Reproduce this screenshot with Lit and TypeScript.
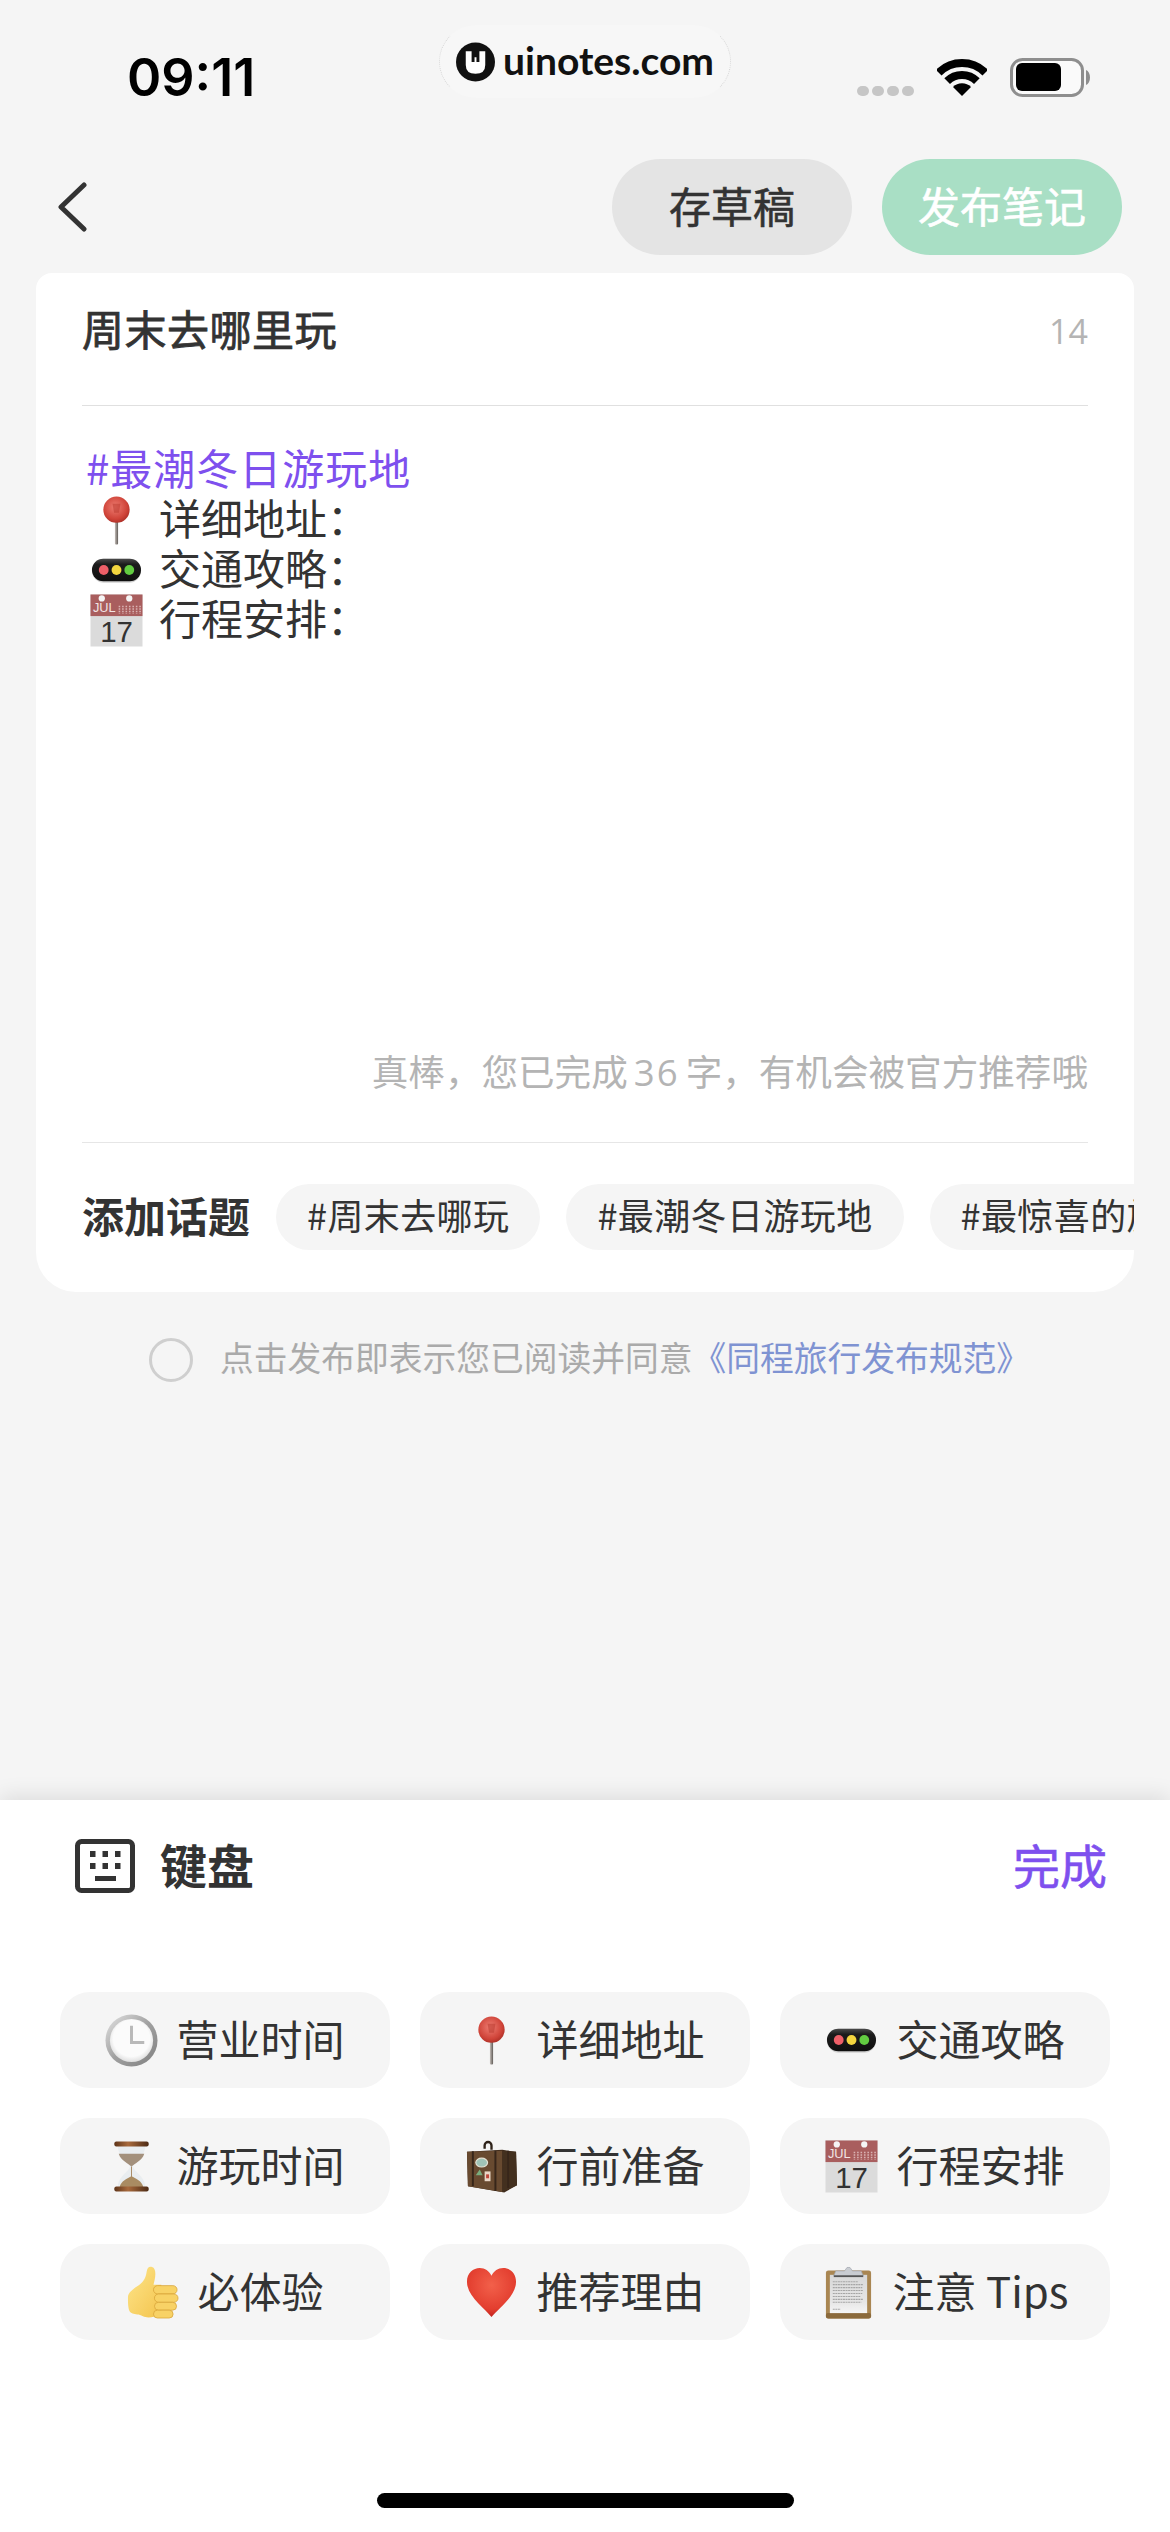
import { LitElement, html, css } from 'lit';
import { customElement } from 'lit/decorators.js';

const emoji = {
    pin: html`<svg class="emoji" viewBox="0 0 54 54">
        <defs>
            <radialGradient id="pinHead" cx="0.45" cy="0.4" r="0.65"><stop offset="0" stop-color="#ee7d72"/><stop offset="0.7" stop-color="#cf4338"/><stop offset="1" stop-color="#a62c24"/></radialGradient>
            <linearGradient id="pinNeedle" x1="0" x2="1" y1="0" y2="0"><stop offset="0" stop-color="#c4bdb8"/><stop offset="1" stop-color="#5f5a56"/></linearGradient>
        </defs>
        <rect x="25.4" y="26" width="3.2" height="25.5" rx="1" fill="url(#pinNeedle)"/>
        <circle cx="27" cy="16" r="13.4" fill="url(#pinHead)"/>
        <path d="M23 10h8l-1.5 9h-5z" fill="#b93a30" opacity="0.55"/>
    </svg>`,
    traffic: html`<svg class="emoji" viewBox="0 0 54 54">
        <defs><linearGradient id="lightBody" x1="0" x2="0" y1="0" y2="1"><stop offset="0" stop-color="#4a4a4a"/><stop offset="0.25" stop-color="#1c1c1c"/><stop offset="1" stop-color="#0f0f0f"/></linearGradient></defs>
        <rect x="2" y="15" width="50" height="24.5" rx="12.2" fill="#d2d2d2"/>
        <rect x="2" y="15" width="50" height="23" rx="11.5" fill="url(#lightBody)"/>
        <circle cx="14" cy="26.5" r="5" fill="#ee5f68"/>
        <circle cx="27" cy="26.5" r="5" fill="#f4d63f"/>
        <circle cx="40" cy="26.5" r="5" fill="#62cc41"/>
    </svg>`,
    calendar: html`<svg class="emoji" viewBox="0 0 54 54">
        <rect x="0.5" y="0.5" width="53" height="53" fill="#dbdbdb"/>
        <rect x="0.5" y="0.5" width="53" height="22" fill="#a95e5e"/>
        <circle cx="12" cy="4.5" r="3.2" fill="#f5f5f5"/>
        <circle cx="40" cy="4.5" r="3.2" fill="#f5f5f5"/>
        <text class="cal-month" x="3" y="18.5">JUL</text>
        <path d="M30 12v8M33.500 12v8M37 12v8M40.500 12v8M44 12v8M47.500 12v8M51 12v8" stroke="#d9b3b3" stroke-width="1.600" stroke-dasharray="1.500 1"/>
        <text class="cal-day" x="27" y="49" text-anchor="middle">17</text>
    </svg>`,
    clock: html`<svg class="emoji" viewBox="0 0 54 54">
        <defs>
            <linearGradient id="clockRim" x1="0" x2="1" y1="0" y2="1"><stop offset="0" stop-color="#e4e4e4"/><stop offset="0.5" stop-color="#a0a0a0"/><stop offset="1" stop-color="#7f7f7f"/></linearGradient>
            <radialGradient id="clockFace" cx="0.5" cy="0.45" r="0.6"><stop offset="0.7" stop-color="#fbfbfb"/><stop offset="1" stop-color="#d4d4d4"/></radialGradient>
        </defs>
        <circle cx="27" cy="27" r="26.500" fill="url(#clockRim)"/>
        <circle cx="27" cy="27" r="22" fill="url(#clockFace)"/>
        <path d="M27 12v17h13" fill="none" stroke="#b9b9b9" stroke-width="3"/>
    </svg>`,
    hourglass: html`<svg class="emoji" viewBox="0 0 54 54">
        <defs><linearGradient id="glassWood" x1="0" x2="1" y1="0" y2="0"><stop offset="0" stop-color="#5e3419"/><stop offset="0.4" stop-color="#a86a3d"/><stop offset="1" stop-color="#4c2a14"/></linearGradient></defs>
        <path d="M13 6c0 11 11 15 12.500 21C24 33 13 37 13 48h28c0-11-11-15-12.500-21C30 21 41 17 41 6z" fill="#e9edf0"/>
        <path d="M14 14h26c-2 7-10 10-13 13-3-3-11-6-13-13z" fill="#a3907c"/>
        <path d="M26.500 27h1v13h-1z" fill="#a98b67"/>
        <path d="M15 48c1-6 8-9 12-11 4 2 11 5 12 11z" fill="#a98b62"/>
        <rect x="9.500" y="1.500" width="35" height="5" rx="2" fill="url(#glassWood)"/>
        <rect x="9.500" y="47.500" width="35" height="5" rx="2" fill="url(#glassWood)"/>
    </svg>`,
    suitcase: html`<svg class="emoji" viewBox="0 0 54 54">
        <path d="M20 9V5.500a3.500 3.500 0 0 1 7 0V10" fill="none" stroke="#2e2219" stroke-width="2.400"/>
        <path d="M2 12l36-2 14 2 1 34-13 7.500L3 47z" fill="#3f2b1c"/>
        <path d="M2 12l36-1v42L3 47z" fill="#684a30"/>
        <path d="M38 11l14 1 1 34-15 7z" fill="#43301f"/>
        <path d="M8 11.500v35.500M31 11v41M44 11v38" stroke="#37261a" stroke-width="2"/>
        <ellipse cx="17" cy="23" rx="6" ry="4.500" fill="#9fc3b6" stroke="#e4e2d4" stroke-width="1.200"/>
        <path d="M11 36l4-6 3 6z" fill="#79ad7e"/>
        <rect x="20" y="32" width="6" height="10" fill="#ead8c8"/>
        <rect x="21.500" y="35" width="3" height="4" fill="#bf4a3c"/>
    </svg>`,
    thumb: html`<svg class="emoji" viewBox="0 0 54 54">
        <defs><linearGradient id="thumbSkin" x1="0" x2="1" y1="0" y2="1"><stop offset="0" stop-color="#fde58a"/><stop offset="1" stop-color="#f4c44e"/></linearGradient></defs>
        <path d="M2 32c0-5 5-8 9-11 6-4 9-8 10-15 .5-4 2.500-6 5.500-5 4 1 4 8 2.500 14l-1 4h8v30c-5 2-9 3.500-13 3.500-5 0-7-2-10-3-4-1-7-.5-9-3-2-3-2-10-2-14.500z" fill="url(#thumbSkin)"/>
        <g fill="#f8d266" stroke="#d9a53a" stroke-width="0.800">
            <rect x="28" y="20" width="24" height="8.500" rx="4.200"/>
            <rect x="29" y="28.500" width="24" height="8.500" rx="4.200"/>
            <rect x="29" y="37" width="22.500" height="8" rx="4"/>
            <rect x="28" y="45" width="20" height="8" rx="4"/>
        </g>
    </svg>`,
    heart: html`<svg class="emoji" viewBox="0 0 54 54">
        <defs><radialGradient id="heartFill" cx="0.5" cy="0.35" r="0.7"><stop offset="0" stop-color="#f2604a"/><stop offset="0.7" stop-color="#e33e2f"/><stop offset="1" stop-color="#b81a18"/></radialGradient></defs>
        <path d="M27 52C20 43 2 31 2 16 2 7 8.500 2 15 2c5.500 0 9.500 3 12 8 2.500-5 6.500-8 12-8 6.500 0 13 5 13 14 0 15-18 27-25 36z" fill="url(#heartFill)"/>
    </svg>`,
    clipboard: html`<svg class="emoji" viewBox="0 0 54 54">
        <defs><linearGradient id="clipPaper" x1="0" x2="0" y1="0" y2="1"><stop offset="0" stop-color="#d8d8d8"/><stop offset="0.7" stop-color="#e6e6e6"/><stop offset="1" stop-color="#f5f5f5"/></linearGradient></defs>
        <rect x="4" y="4.500" width="46" height="49" rx="2.500" fill="#a98652"/>
        <rect x="4" y="48" width="46" height="5.500" rx="2" fill="#8b6a3c"/>
        <rect x="8" y="9" width="38" height="39" fill="url(#clipPaper)"/>
        <path d="M11 16h26M11 19h31M11 22h30M11 25h31M11 28h30M11 31h28M11 34h31M11 37h29M11 44h8" stroke="#a6a6a6" stroke-width="1.100" stroke-dasharray="2 0.600"/>
        <path d="M12 10l2-5h9l2.500-3.500h3L31 5h9l2 5z" fill="#c9ccd1" stroke="#9ea4ad" stroke-width="0.700"/>
        <rect x="12" y="9.500" width="30" height="1.800" fill="#555"/>
    </svg>`,
};

const shortcuts = [
    { icon: emoji.clock, label: '营业时间' },
    { icon: emoji.pin, label: '详细地址' },
    { icon: emoji.traffic, label: '交通攻略' },
    { icon: emoji.hourglass, label: '游玩时间' },
    { icon: emoji.suitcase, label: '行前准备' },
    { icon: emoji.calendar, label: '行程安排' },
    { icon: emoji.thumb, label: '必体验' },
    { icon: emoji.heart, label: '推荐理由' },
    { icon: emoji.clipboard, label: '注意 Tips' },
];

const bodyLines = [
    { icon: emoji.pin, label: '详细地址：' },
    { icon: emoji.traffic, label: '交通攻略：' },
    { icon: emoji.calendar, label: '行程安排：' },
];

const topics = ['#周末去哪玩', '#最潮冬日游玩地', '#最惊喜的旅行地'];

@customElement('app-root')
export class AppRoot extends LitElement {
    static styles = css`
        :host {
            display: flex;
            flex-direction: column;
            position: relative;
            width: 1170px;
            height: 2532px;
            overflow: hidden;
            background: #f5f5f5;
            color: #333;
            font-family: 'Noto Sans CJK SC', 'Liberation Sans', sans-serif;
        }
        .status {
            display: flex;
            justify-content: space-between;
            height: 98px;
            padding: 58px 80px 0 127px;
            box-sizing: border-box;
        }
        .time {
            font-family: Inter, sans-serif;
            font-weight: 600;
            font-size: 52px;
            line-height: 40px;
            color: #000;
        }
        .status-icons {
            display: flex;
            align-items: flex-end;
            height: 39px;
        }
        .signal {
            display: flex;
            gap: 3px;
            margin-bottom: 1px;
            margin-right: 23px;
        }
        .signal i {
            width: 12px;
            height: 10px;
            border-radius: 5px;
            background: #c6c6c6;
        }
        .wifi {
            width: 50px;
            height: 37px;
            margin-right: 23px;
            margin-bottom: 1px;
        }
        .battery {
            width: 80px;
            height: 39px;
        }
        .watermark {
            position: absolute;
            top: 25px;
            left: 439px;
            width: 292px;
            height: 73px;
            box-sizing: border-box;
            display: flex;
            align-items: center;
            gap: 8px;
            padding: 0 0 0 16px;
            border-radius: 37px;
            border: 1px dotted;
            border-color: transparent #d6d6d6;
            background: #f7f7f7;
            font-family: Lato, sans-serif;
            font-weight: 700;
            font-size: 39px;
            color: #111;
        }
        .watermark span {
            padding-bottom: 3px;
        }
        .watermark svg {
            width: 39px;
            height: 40px;
            flex: none;
        }
        .nav {
            display: flex;
            align-items: center;
            gap: 30px;
            height: 96px;
            margin-top: 61px;
            padding: 0 48px 0 58px;
        }
        .back {
            width: 30px;
            height: 50px;
            margin-right: auto;
        }
        .btn {
            width: 240px;
            height: 96px;
            box-sizing: border-box;
            padding-bottom: 6px;
            border-radius: 48px;
            display: flex;
            align-items: center;
            justify-content: center;
            font-size: 42px;
            -webkit-text-stroke: 0.6px currentColor;
        }
        .btn.draft {
            background: #e4e4e4;
        }
        .btn.publish {
            background: #a9dfc5;
            color: #fff;
        }
        .card {
            display: flex;
            flex-direction: column;
            height: 1019px;
            box-sizing: border-box;
            margin: 18px 36px 0;
            padding: 0 46px;
            overflow: hidden;
            background: #fff;
            border-radius: 16px 16px 40px 40px;
        }
        .title-row {
            display: flex;
            justify-content: space-between;
            height: 133px;
            flex: none;
            box-sizing: border-box;
            padding-top: 34px;
            line-height: 42px;
            border-bottom: 1px solid #e0e0e0;
        }
        .title {
            font-size: 42px;
            letter-spacing: 0.5px;
            -webkit-text-stroke: 0.8px currentColor;
        }
        .count {
            margin-top: 3px;
            font-family: 'Open Sans', sans-serif;
            font-size: 34px;
            color: #b4b4b4;
        }
        .content {
            display: flex;
            flex-direction: column;
            padding: 39px 0 0 4px;
            font-size: 42px;
        }
        .tag {
            height: 50px;
            line-height: 44px;
            letter-spacing: 1px;
            color: #7e50ee;
        }
        .line {
            display: flex;
            align-items: center;
            height: 50px;
            line-height: 44px;
        }
        .line .emoji {
            margin: 0 16px 0 4px;
        }
        .line .label {
            padding-bottom: 6px;
        }
        .hint {
            margin-top: auto;
            margin-bottom: 50px;
            text-align: right;
            font-size: 36.6px;
            line-height: 40px;
            color: #b4b4b4;
            white-space: nowrap;
        }
        .hint span {
            margin: 0 6px;
            letter-spacing: 2px;
            font-family: 'Open Sans', sans-serif;
        }
        .divider {
            flex: none;
            height: 1px;
            background: #e6e6e6;
        }
        .topics {
            display: flex;
            align-items: center;
            flex: none;
            gap: 26px;
            height: 149px;
            box-sizing: border-box;
            margin-right: -46px;
            padding: 41px 0 42px;
            overflow: hidden;
        }
        .topics-label {
            flex: none;
            padding-bottom: 6px;
            font-size: 42px;
            font-weight: 700;
        }
        .chip {
            flex: none;
            height: 66px;
            box-sizing: border-box;
            display: flex;
            align-items: center;
            padding: 0 31px 6px;
            border-radius: 33px;
            background: #f5f5f5;
            font-size: 36px;
            letter-spacing: 0.4px;
        }
        .consent {
            display: flex;
            align-items: center;
            gap: 27px;
            height: 44px;
            margin-top: 46px;
            padding-left: 149px;
            font-size: 33.75px;
            color: #aaa;
        }
        .consent-text {
            line-height: 38px;
            padding-bottom: 6px;
        }
        .radio {
            width: 44px;
            height: 44px;
            box-sizing: border-box;
            border: 3px solid #cfcfcf;
            border-radius: 50%;
        }
        .link {
            color: #7f93d2;
        }
        .sheet {
            display: flex;
            flex-direction: column;
            margin-top: auto;
            height: 732px;
            background: #fff;
            box-shadow: 0 -4px 20px rgba(0, 0, 0, 0.1);
        }
        .sheet-head {
            display: flex;
            align-items: center;
            height: 54px;
            margin-top: 39px;
            padding: 0 63px 0 75px;
        }
        .keyboard {
            width: 60px;
            height: 54px;
            margin-right: 25px;
        }
        .sheet-title {
            font-size: 47px;
            font-weight: 700;
            margin-right: auto;
            padding-bottom: 6px;
        }
        .done {
            font-size: 47px;
            padding-bottom: 6px;
            color: #7e50ee;
            -webkit-text-stroke: 0.6px currentColor;
        }
        .grid {
            display: grid;
            grid-template-columns: repeat(3, 330px);
            grid-auto-rows: 96px;
            gap: 30px;
            margin-top: 99px;
            padding: 0 60px;
        }
        .shortcut {
            display: flex;
            align-items: center;
            justify-content: center;
            gap: 18px;
            border-radius: 30px;
            background: #f5f5f5;
            font-size: 42px;
        }
        .shortcut span {
            padding-bottom: 6px;
        }
        .emoji {
            flex: none;
            width: 53px;
            height: 53px;
            overflow: visible;
        }
        .cal-month {
            font-family: 'Liberation Sans', sans-serif;
            font-size: 13px;
            fill: #f2e4e4;
        }
        .cal-day {
            font-family: 'Liberation Sans', sans-serif;
            font-size: 30px;
            fill: #333;
        }
        .home {
            width: 417px;
            height: 15px;
            margin: auto auto 24px;
            border-radius: 8px;
            background: #000;
        }
    `;

    render() {
        return html`
            <div class="status">
                <div class="time">09:11</div>
                <div class="status-icons">
                    <div class="signal"><i></i><i></i><i></i><i></i></div>
                    <svg class="wifi" viewBox="0 0 50 37" fill="none" stroke="#000" stroke-width="8">
                        <path d="M1.700 13.700A33 33 0 0 1 48.300 13.700"/>
                        <path d="M10.150 22.150A21 21 0 0 1 39.850 22.150"/>
                        <path d="M25 37l-9-9a12.700 12.700 0 0 1 18 0z" fill="#000" stroke="none"/>
                    </svg>
                    <svg class="battery" viewBox="0 0 80 39">
                        <rect x="1.500" y="1.500" width="71" height="36" rx="11" fill="#fafafa" stroke="#8e8e8e" stroke-width="3"/>
                        <rect x="6" y="5" width="45" height="28" rx="6" fill="#000"/>
                        <path d="M76 12c2.500 1 4 4 4 7.500s-1.500 6.500-4 7.500z" fill="#8e8e8e"/>
                    </svg>
                </div>
            </div>
            <div class="watermark">
                <svg viewBox="0 0 40 40">
                    <circle cx="20" cy="20" r="20" fill="#111"/>
                    <path d="M10 9h6v11h3v-5h2v5h3V9h6v14q0 9-10 9t-10-9z" fill="#fff"/>
                </svg>
                <span>uinotes.com</span>
            </div>
            <div class="nav">
                <svg class="back" viewBox="0 0 30 50" fill="none" stroke="#333" stroke-width="5" stroke-linecap="round" stroke-linejoin="round">
                    <path d="M26 3L3 25l23 22"/>
                </svg>
                <div class="btn draft">存草稿</div>
                <div class="btn publish">发布笔记</div>
            </div>
            <div class="card">
                <div class="title-row">
                    <span class="title">周末去哪里玩</span>
                    <span class="count">14</span>
                </div>
                <div class="content">
                    <div class="tag">#最潮冬日游玩地</div>
                    ${bodyLines.map(l => html`<div class="line">${l.icon}<span class="label">${l.label}</span></div>`)}
                </div>
                <div class="hint">真棒，您已完成<span>36</span>字，有机会被官方推荐哦</div>
                <div class="divider"></div>
                <div class="topics">
                    <div class="topics-label">添加话题</div>
                    ${topics.map(t => html`<div class="chip">${t}</div>`)}
                </div>
            </div>
            <div class="consent">
                <div class="radio"></div>
                <div class="consent-text">点击发布即表示您已阅读并同意<span class="link">《同程旅行发布规范》</span></div>
            </div>
            <div class="sheet">
                <div class="sheet-head">
                    <svg class="keyboard" viewBox="0 0 60 54">
                        <rect x="2.500" y="2.500" width="55" height="49" rx="4" fill="none" stroke="#333" stroke-width="5"/>
                        <path d="M15 12h5.500v6H15zM27.500 12H33v6h-5.500zM40 12h5.500v6H40zM15 24h5.500v6H15zM27.500 24H33v6h-5.500zM40 24h5.500v6H40zM20 37h21v5H20z" fill="#333"/>
                    </svg>
                    <span class="sheet-title">键盘</span>
                    <span class="done">完成</span>
                </div>
                <div class="grid">
                    ${shortcuts.map(s => html`<div class="shortcut">${s.icon}<span>${s.label}</span></div>`)}
                </div>
                <div class="home"></div>
            </div>
        `;
    }
}
